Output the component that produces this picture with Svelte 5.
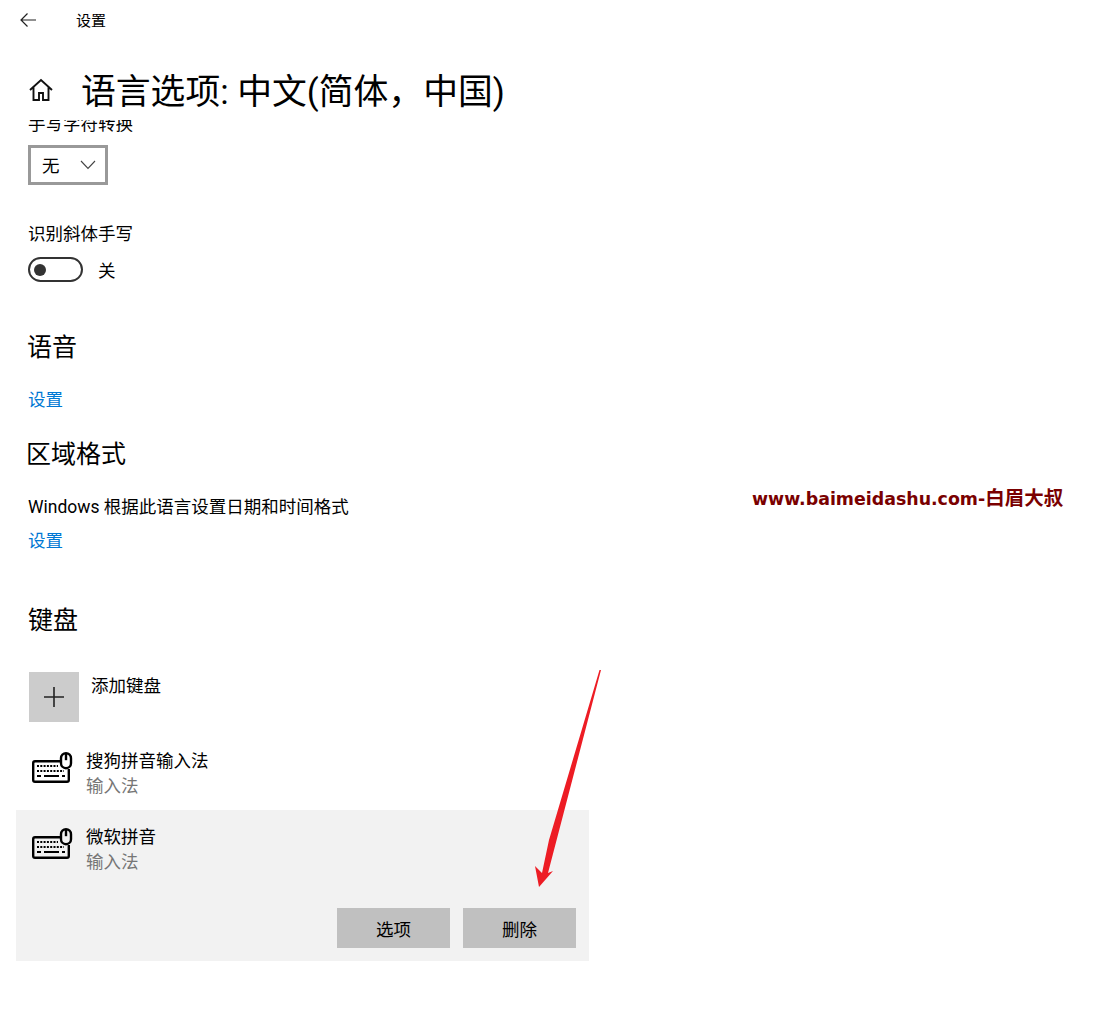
<script lang="ts">
  const keyboards = [
    { name: '搜狗拼音输入法', kind: '输入法', selected: false },
    { name: '微软拼音', kind: '输入法', selected: true }
  ];
</script>

{#snippet keyboardIcon()}
  <svg class="kb-icon" width="42" height="32" viewBox="0 0 42 32" fill="none" stroke="#000">
    <path d="M28 9.200H3a1.800 1.800 0 0 0-1.800 1.800v17a1.800 1.800 0 0 0 1.800 1.800h32a1.800 1.800 0 0 0 1.800-1.800V17" stroke-width="2.400" />
    <rect x="29" y="1.200" width="10" height="15" rx="5" stroke-width="2.400" />
    <path d="M34 1.200v7" stroke-width="2.400" />
    <path d="M5 14h21M5 19h27" stroke-width="2" stroke-dasharray="2 1.300" />
    <path d="M5 24h4M12 24h15M30 24h3" stroke-width="2" />
  </svg>
{/snippet}

<div class="page">
  <header class="top">
    <div class="nav">
      <svg width="18" height="16" viewBox="0 0 18 16" fill="none" stroke="#222" stroke-width="1.200">
        <path d="M17 8H2M8.500 1.500 2 8l6.500 6.500" />
      </svg>
      <span>设置</span>
    </div>
    <div class="title-row">
      <svg width="26" height="26" viewBox="0 0 26 26" fill="none" stroke="#111" stroke-width="1.900">
        <path d="M2 13 13 3l11 10M5.500 10.500V23h5.500v-7h4v7h5.500V10.500" />
      </svg>
      <h1>语言选项: 中文(简体，中国)</h1>
    </div>
  </header>

  <main class="scroll">
    <div class="content">
      <div class="label clipped">手写字符转换</div>
      <div class="select">
        <span>无</span>
        <svg width="16" height="10" viewBox="0 0 16 10" fill="none" stroke="#444" stroke-width="1.100">
          <path d="M1 1l7 7.500L15 1" />
        </svg>
      </div>

      <div class="label handwriting">识别斜体手写</div>
      <div class="toggle-row">
        <span class="toggle"><span class="knob"></span></span>
        <span>关</span>
      </div>

      <h2 class="speech">语音</h2>
      <div class="link first-link">设置</div>

      <h2 class="region">区域格式</h2>
      <div class="label region-text">Windows 根据此语言设置日期和时间格式</div>
      <div class="link">设置</div>

      <h2 class="keyboard">键盘</h2>

      <div class="add">
        <span class="tile">
          <svg width="22" height="22" viewBox="0 0 22 22" stroke="#222" stroke-width="1.600">
            <path d="M11 1v20M1 11h20" />
          </svg>
        </span>
        <span class="add-text">添加键盘</span>
      </div>

      {#each keyboards as kb}
        <div class="kb" class:selected={kb.selected}>
          <div class="kb-row">
            {@render keyboardIcon()}
            <div class="kb-text">
              <div>{kb.name}</div>
              <div class="kind">{kb.kind}</div>
            </div>
          </div>
          {#if kb.selected}
            <div class="actions">
              <button>选项</button>
              <button>删除</button>
            </div>
          {/if}
        </div>
      {/each}
    </div>
  </main>

  <div class="watermark">www.baimeidashu.com-<span>白眉大叔</span></div>

  <svg class="arrow" width="70" height="222" viewBox="533 668 70 222">
    <path fill="#ed1c24" d="M601 670 548 873 553 871 539 887 535 866 542 873 549 840 599.500 670Z" />
  </svg>
</div>

<style>
  :global(body) {
    background: #fff;
  }

  .page {
    position: relative;
    height: 1012px;
    overflow: hidden;
    background: #fff;
    color: #000;
    font-family: Roboto, "Noto Sans CJK SC", sans-serif;
    font-size: 17.5px;
  }

  .top {
    height: 120px;
  }

  .nav {
    display: flex;
    align-items: center;
    height: 40px;
    padding-left: 19px;
    font-size: 15px;
  }

  .nav span {
    margin-left: -1px;
    margin-top: -2px;
  }

  .nav svg {
    margin-right: 40px;
    margin-top: -1px;
  }

  .title-row {
    display: flex;
    align-items: center;
    height: 60px;
    margin-top: 20px;
    padding-left: 28px;
  }

  .title-row h1 {
    margin: 4px 0 0 27px;
    font-size: 34.800px;
    font-weight: 400;
    line-height: 60px;
    white-space: nowrap;
  }

  .scroll {
    height: 892px;
    overflow: hidden;
  }

  .content {
    padding-left: 28px;
  }

  .label {
    height: 26px;
    line-height: 26px;
  }

  .clipped {
    margin-top: -9px;
  }

  .select {
    display: flex;
    align-items: center;
    justify-content: space-between;
    box-sizing: border-box;
    width: 80px;
    height: 40px;
    margin-top: 8px;
    padding: 0 9px 0 11px;
    border: 3px solid #999;
  }

  .select span {
    margin-top: -2px;
  }

  .handwriting {
    margin-top: 36px;
  }

  .toggle-row {
    display: flex;
    align-items: center;
    gap: 15px;
    margin-top: 10px;
  }

  .toggle {
    display: flex;
    align-items: center;
    box-sizing: border-box;
    width: 55px;
    height: 25px;
    padding-left: 4px;
    border: 2.500px solid #333;
    border-radius: 13px;
  }

  .knob {
    width: 12px;
    height: 12px;
    border-radius: 50%;
    background: #333;
  }

  h2 {
    margin: 0;
    font-size: 25px;
    font-weight: 400;
    line-height: 36px;
  }

  .speech {
    margin-top: 48px;
    margin-left: -1px;
  }

  .link {
    height: 26px;
    line-height: 26px;
    color: #0078d4;
  }

  .first-link {
    margin-top: 21px;
  }

  .region {
    margin-top: 24px;
    margin-left: -2px;
  }

  .region-text {
    margin-top: 21px;
  }

  .link:not(.first-link) {
    margin-top: 8px;
  }

  .keyboard {
    margin-top: 49px;
  }

  .add {
    display: flex;
    align-items: flex-start;
    margin: 33px 0 0 1px;
  }

  .tile {
    display: flex;
    align-items: center;
    justify-content: center;
    width: 50px;
    height: 50px;
    background: #ccc;
  }

  .add-text {
    margin: 1px 0 0 12px;
    line-height: 26px;
  }

  .kb {
    box-sizing: border-box;
    width: 573px;
    height: 76px;
    margin-left: -12px;
    padding: 13px 13px 0 16px;
  }

  .add + .kb {
    margin-top: 12px;
  }

  .kb.selected {
    height: 151px;
    background: #f2f2f2;
  }

  .kb-row {
    display: flex;
    align-items: flex-start;
  }

  .kb-icon {
    flex: none;
    margin-top: 5px;
  }

  .kb-text {
    margin: 2px 0 0 12px;
    line-height: 25px;
  }

  .kind {
    color: #767676;
  }

  .actions {
    display: flex;
    justify-content: flex-end;
    gap: 13px;
    margin-top: 33px;
  }

  .actions button {
    width: 113px;
    height: 40px;
    padding: 0;
    border: none;
    background: #c0c0c0;
    color: #000;
    font: inherit;
  }

  .watermark {
    position: absolute;
    left: 752px;
    top: 486px;
    color: #7a0000;
    font-family: "DejaVu Sans", "Noto Sans CJK SC", sans-serif;
    font-size: 17.4px;
    font-weight: 700;
    line-height: 26px;
    white-space: nowrap;
  }

  .watermark span {
    font-size: 19.500px;
  }

  .arrow {
    position: absolute;
    left: 533px;
    top: 668px;
  }
</style>
